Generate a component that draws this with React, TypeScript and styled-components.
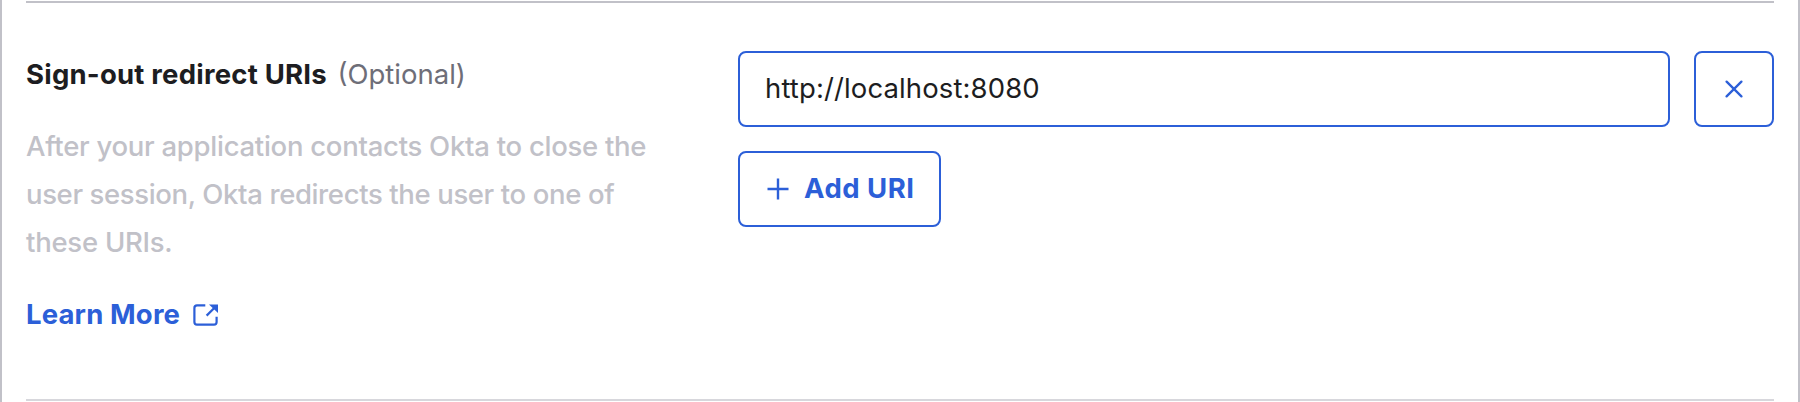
import React from "react";
import styled, { createGlobalStyle } from "styled-components";

const blue = "#2c5fd8";
const ink = "#1d1d21";
const muted = "#6e6e78";
const faint = "#c1c1c8";

const GlobalStyle = createGlobalStyle`
  * { box-sizing: border-box; }
  body { margin: 0; background: #fff; font-family: Inter, "Liberation Sans", sans-serif; }
`;

const Panel = styled.main`
  height: 402px;
  padding: 1px 24px;
  border: solid ${faint};
  border-width: 0 2px;
  overflow: hidden;
`;

const Field = styled.section`
  display: flex;
  height: 400px;
  border-top: 2px solid ${faint};
  border-bottom: 2px solid #d7d7dc;
`;

const Info = styled.div`
  width: 712px;
  padding-top: 48px;
`;

const Label = styled.div`
  display: flex;
  align-items: baseline;
  gap: 10.5px;
  height: 48px;
`;

const Text = styled.span<{ $weight: number; $color: string; $spacing?: number }>`
  padding-bottom: 2px;
  font-size: 27.5px;
  line-height: 46px;
  white-space: nowrap;
  font-weight: ${(p) => p.$weight};
  color: ${(p) => p.$color};
  letter-spacing: ${(p) => p.$spacing ?? 0}px;
`;

const Hint = styled.p`
  display: flex;
  flex-direction: column;
  align-items: flex-start;
  margin: 24px 0;
`;

const LearnMore = styled.a`
  display: flex;
  align-items: center;
  gap: 13px;
`;

const Controls = styled.div`
  flex: 1;
  padding-top: 48px;
`;

const Row = styled.div`
  display: flex;
  gap: 24px;
  margin-bottom: 24px;
`;

const Box = styled.div`
  display: flex;
  align-items: center;
  height: 76px;
  border: 2px solid ${blue};
  border-radius: 8px;
`;

const Input = styled(Box)`
  flex: 1;
  padding-left: 25px;
`;

const RemoveButton = styled(Box)`
  width: 80px;
  justify-content: center;
`;

const AddButton = styled(Box)`
  width: 203px;
  padding-left: 27px;
  gap: 15px;
`;

export default function App() {
  return (
    <>
      <GlobalStyle />
      <Panel>
        <Field>
          <Info>
            <Label>
              <Text $weight={700} $color={ink} $spacing={0.22}>Sign-out redirect URIs</Text>
              <Text $weight={400} $color={muted}>(Optional)</Text>
            </Label>
            <Hint>
              <Text $weight={500} $color={faint} $spacing={-0.27}>After your application contacts Okta to close the</Text>
              <Text $weight={500} $color={faint} $spacing={-0.37}>user session, Okta redirects the user to one of</Text>
              <Text $weight={500} $color={faint} $spacing={-0.25}>these URIs.</Text>
            </Hint>
            <LearnMore>
              <Text $weight={700} $color={blue} $spacing={0.15}>Learn More</Text>
              <svg width="25" height="22" viewBox="0 0 25 22" fill="none" stroke={blue} strokeWidth="2.2">
                <path d="M12.3 1.4H4Q1.4 1.4 1.4 4V18Q1.4 20.6 4 20.6H21Q23.6 20.6 23.6 18V12.8" />
                <path d="M13.6 11.6L21.5 3.7" />
                <path d="M16 0.4H25V9Z" fill={blue} stroke="none" />
              </svg>
            </LearnMore>
          </Info>
          <Controls>
            <Row>
              <Input>
                <Text $weight={400} $color={ink} $spacing={0.12}>http://localhost:8080</Text>
              </Input>
              <RemoveButton>
                <svg width="18" height="18" viewBox="0 0 18 18" stroke={blue} strokeWidth="2.3" strokeLinecap="round">
                  <path d="M1.6 1.6L16.4 16.4M16.4 1.6L1.6 16.4" />
                </svg>
              </RemoveButton>
            </Row>
            <AddButton>
              <svg width="22" height="22" viewBox="0 0 22 22" stroke={blue} strokeWidth="2.4">
                <path d="M0.5 11H21.5M11 0.5V21.5" />
              </svg>
              <Text $weight={700} $color={blue} $spacing={0.5}>Add URI</Text>
            </AddButton>
          </Controls>
        </Field>
      </Panel>
    </>
  );
}
